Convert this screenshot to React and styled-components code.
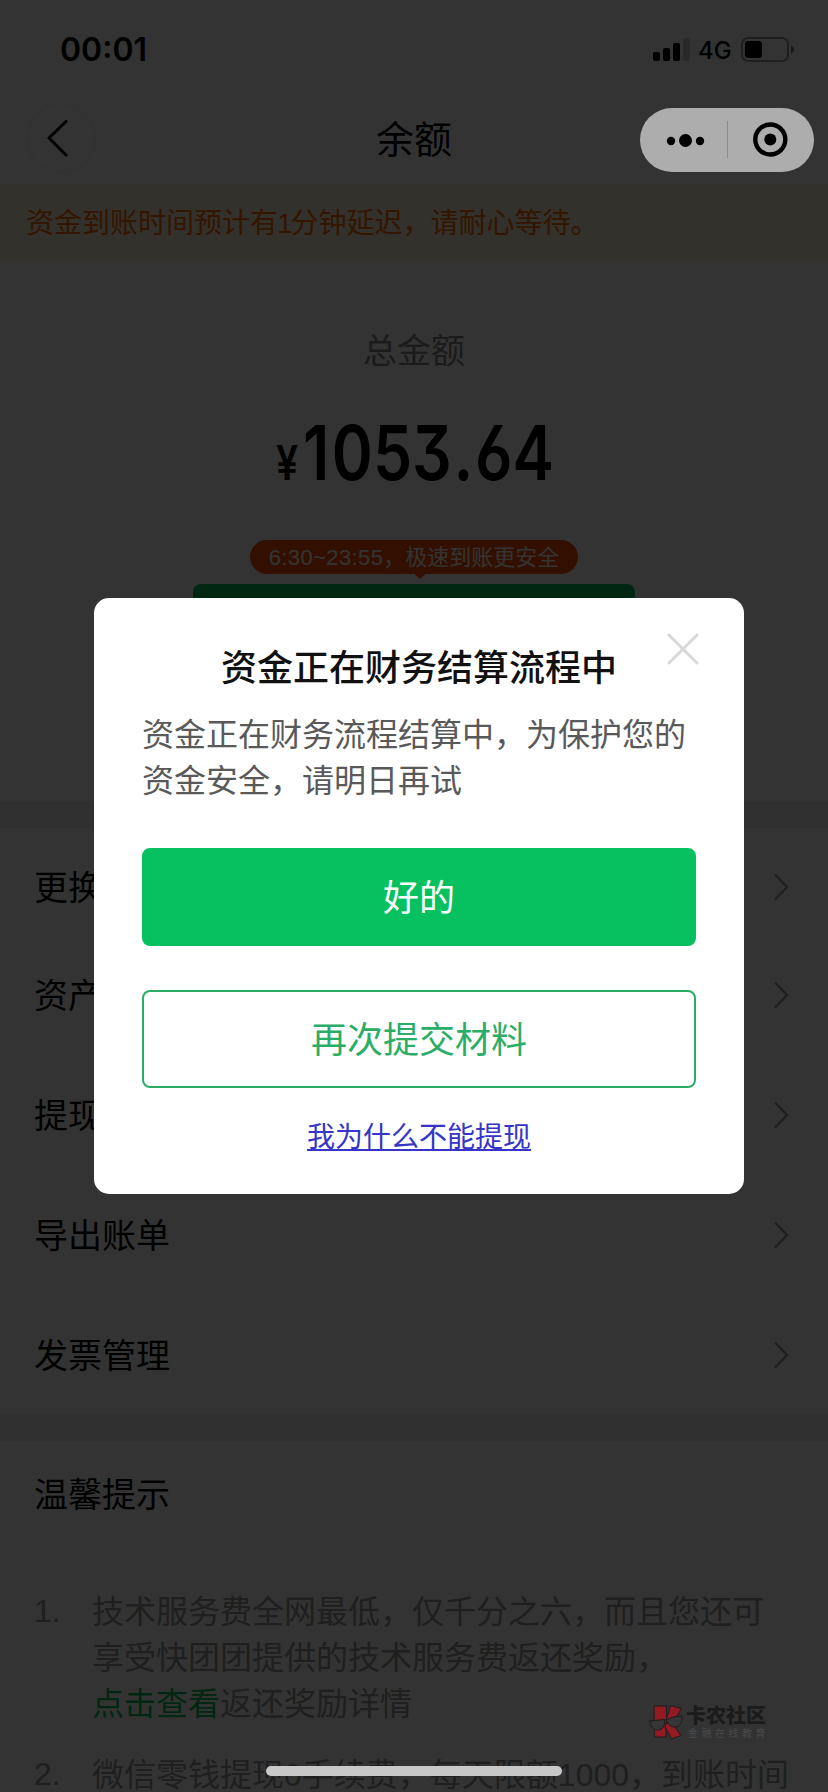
import React from "react";
import styled, { createGlobalStyle, css } from "styled-components";

const GlobalStyle = createGlobalStyle`
  * {
    box-sizing: border-box;
  }

  body {
    margin: 0;
    background-color: #fff;
    font-family: "Noto Sans CJK SC", "Noto Sans", sans-serif;
  }
`;

const menuItems = ["更换", "资产", "提现", "导出账单", "发票管理"];

const App = () => {
  return (
    <Screen>
      <GlobalStyle />
      <StatusBar>
        <Clock>00:01</Clock>
        <StatusIcons>
          <svg width="37" height="23" viewBox="0 0 37 23">
            <rect x="0" y="14" width="7" height="9" rx="2" />
            <rect x="10" y="10" width="7" height="13" rx="2" />
            <rect x="20" y="5" width="7" height="18" rx="2" />
            <rect x="30" y="0" width="7" height="23" rx="2" opacity="0.2" />
          </svg>
          <Network>4G</Network>
          <svg width="54" height="25" viewBox="0 0 54 25">
            <rect x="1" y="1" width="46" height="23" rx="6" fill="none" stroke="#000" strokeWidth="2" opacity="0.4" />
            <rect x="4" y="4" width="17" height="17" rx="3" />
            <path d="M50 8.500c4 1.500 4 6.500 0 8z" opacity="0.5" />
          </svg>
        </StatusIcons>
      </StatusBar>

      <NavBar>
        <BackButton>
          <svg width="22" height="38" viewBox="0 0 22 38" fill="none">
            <path d="M20 2.500L3 19L20 36" stroke="#000" strokeWidth="3" strokeLinecap="round" strokeLinejoin="round" />
          </svg>
        </BackButton>
        <NavTitle>余额</NavTitle>
      </NavBar>

      <Notice>
        资金到账时间预计有<NoticeDigit>1</NoticeDigit>分钟延迟，请耐心等待。
      </Notice>

      <Balance>
        <BalanceLabel>总金额</BalanceLabel>
        <Amount>
          <Currency>¥</Currency>
          <Digits>
            <Thousand>1</Thousand>053<Dot>.</Dot>64
          </Digits>
        </Amount>
        <Tip>
          <TipTime>6:30~23:55</TipTime>，极速到账更安全
        </Tip>
        <WithdrawButton />
      </Balance>

      <Menu>
        {menuItems.map((item) => (
          <MenuRow key={item}>
            <MenuLabel>{item}</MenuLabel>
            <svg width="16" height="28" viewBox="0 0 16 28" fill="none">
              <path d="M2 1.500L14 14L2 26.500" stroke="#9a9a9a" strokeWidth="2.400" />
            </svg>
          </MenuRow>
        ))}
      </Menu>

      <Hints>
        <HintsTitle>温馨提示</HintsTitle>
        <HintList>
          <Hint>
            <HintNumber>1.</HintNumber>
            <p>
              技术服务费全网最低，仅千分之六，而且您还可
              <br />
              享受快团团提供的技术服务费返还奖励，
              <br />
              <HintLink>点击查看</HintLink>返还奖励详情
            </p>
          </Hint>
          <Hint>
            <HintNumber>2.</HintNumber>
            <p>
              微信零钱提现<Latin>0</Latin>手续费，每天限额<Latin>1000</Latin>，到账时间
            </p>
          </Hint>
        </HintList>
      </Hints>

      <Overlay>
        <Dialog>
          <CloseButton>
            <svg width="32" height="32" viewBox="0 0 32 32" fill="none">
              <path d="M2 2L30 30M30 2L2 30" stroke="#d8d8d8" strokeWidth="3" strokeLinecap="round" />
            </svg>
          </CloseButton>
          <DialogTitle>资金正在财务结算流程中</DialogTitle>
          <DialogText>资金正在财务流程结算中，为保护您的资金安全，请明日再试</DialogText>
          <Button $primary>好的</Button>
          <Button>再次提交材料</Button>
          <WhyLink>我为什么不能提现</WhyLink>
        </Dialog>
      </Overlay>

      <Capsule>
        <svg width="174" height="64" viewBox="0 0 174 64">
          <circle cx="31" cy="33" r="4.200" />
          <circle cx="45.500" cy="32.500" r="6.500" />
          <circle cx="60" cy="33" r="4.200" />
          <path d="M87.500 13v37" stroke="#8c8c8c" strokeWidth="1" />
          <circle cx="130.300" cy="31.500" r="15" fill="none" stroke="#000" strokeWidth="4.400" />
          <circle cx="130.300" cy="31.500" r="6" />
        </svg>
      </Capsule>

      <Watermark>
        <svg width="36" height="36" viewBox="0 0 36 36">
          <g fill="#921a22" stroke="#1d1d1d" strokeWidth="1">
            <path d="M6 2h12.500l-0.500 31H6.500z" />
            <path d="M22.500 1.500L33.500 4.500L26 17H18z" />
            <path d="M18 19h6.500l8.500 12.500-9.500 3.500-6.500-12z" />
          </g>
          <g fill="#363636" stroke="#1c1c1c" strokeWidth="1">
            <path d="M1 17l15.500-1.500c1 6-2 10.500-7 10.500-4 0-6.500-3-7-7z" />
            <path d="M18.500 16c5-3 10-4 15.500-4 0 7-2 10.500-7 11-4 0-7-2-8.500-7z" />
          </g>
        </svg>
        <div>
          <MarkName>卡农社区</MarkName>
          <MarkSlogan>金融在线教育</MarkSlogan>
        </div>
      </Watermark>

      <HomeIndicator />
    </Screen>
  );
};

const Screen = styled.div`
  position: relative;
  width: 828px;
  height: 1792px;
  overflow: hidden;
  background-color: #fff;

  svg {
    display: block;
  }

  p {
    margin: 0;
  }
`;

const Latin = styled.span`
  font-family: "Liberation Sans", sans-serif;
`;

const StatusBar = styled.header`
  display: flex;
  justify-content: space-between;
  height: 88px;
  padding: 0 33px 0 60px;
`;

const Clock = styled.div`
  padding-top: 31px;
  font: 600 32px/38px Inter, sans-serif;
`;

const StatusIcons = styled.div`
  display: flex;
  align-items: center;
  height: 25px;
  margin-top: 37px;
`;

const Network = styled.span`
  width: 42px;
  margin-right: 9px;
  padding: 2px 0 0 8px;
  font: 500 24px/28px Inter, sans-serif;
`;

const NavBar = styled.nav`
  display: grid;
  grid-template-columns: 70px 1fr 70px;
  align-items: center;
  height: 95px;
  padding: 4px 26px 0;
`;

const BackButton = styled.div`
  display: flex;
  align-items: center;
  justify-content: center;
  width: 70px;
  height: 70px;
  padding-right: 8px;
  border: 2px solid #f3f3f3;
  border-radius: 50%;
`;

const NavTitle = styled.h1`
  margin: 0;
  padding-bottom: 2px;
  font-size: 38px;
  font-weight: 400;
  line-height: 50px;
  text-align: center;
`;

const Notice = styled.div`
  height: 78px;
  padding-left: 26px;
  background-color: #fff5d7;
  color: #ff6a00;
  font-size: 28px;
  line-height: 77px;
`;

const NoticeDigit = styled(Latin)`
  margin-left: -1px;
  letter-spacing: -2px;
`;

const Balance = styled.section`
  display: flex;
  flex-direction: column;
  align-items: center;
  height: 540px;
  padding-top: 63px;
`;

const BalanceLabel = styled.div`
  color: #888;
  font-size: 34px;
  line-height: 50px;
`;

const Amount = styled.div`
  display: flex;
  align-items: baseline;
  width: 276px;
  height: 90px;
  margin-top: 34px;
  font-family: Inter, sans-serif;
  font-weight: 600;
  line-height: 90px;
  white-space: nowrap;
`;

const Currency = styled.span`
  flex: 0 0 26px;
  font-size: 48px;
  transform: scaleX(0.82);
  transform-origin: left;
`;

/* open six and flat-top three */
const Digits = styled.span`
  font-size: 75px;
  font-feature-settings: "cv03", "cv09";
  transform: scaleX(0.83);
  transform-origin: left;
`;

const Thousand = styled.span`
  margin-right: 3px;
`;

const Dot = styled.span`
  margin: 0 2px;
`;

const Tip = styled.div`
  position: relative;
  width: 328px;
  height: 34px;
  margin-top: 42px;
  border-radius: 17px;
  background-color: #ff4d00;
  color: #fff;
  font-size: 22px;
  line-height: 30px;
  text-align: center;
  white-space: nowrap;

  &::after {
    content: "";
    position: absolute;
    top: 33px;
    left: 163px;
    border: 7px solid transparent;
    border-top: 6px solid #ff4d00;
    border-bottom: 0;
  }
`;

const TipTime = styled(Latin)`
  letter-spacing: 0.4px;
`;

const WithdrawButton = styled.div`
  width: 442px;
  height: 90px;
  margin-top: 10px;
  border-radius: 8px;
  background-color: #07c160;
`;

const Menu = styled.section`
  border-top: 27px solid #f0f0f0;
`;

const MenuRow = styled.div`
  display: flex;
  align-items: center;
  justify-content: space-between;
  height: 120px;
  padding: 0 39px 0 34px;
  border-bottom: 1px solid #f8f8f8;
  font-size: 34px;

  &:first-child {
    height: 107px;
    padding-top: 11px;
  }
`;

const MenuLabel = styled.span`
  padding-bottom: 2px;
`;

const Hints = styled.section`
  border-top: 26px solid #f0f0f0;
`;

const HintsTitle = styled.h2`
  height: 104px;
  margin: 0;
  padding-left: 34px;
  border-bottom: 1px solid #f8f8f8;
  font-size: 34px;
  font-weight: 400;
  line-height: 103px;
`;

const HintList = styled.div`
  padding: 41px 34px 0;
`;

const Hint = styled.div`
  display: flex;
  margin-bottom: 25px;
  color: #999;
  font-size: 32px;
  line-height: 46px;
  white-space: nowrap;
`;

const HintNumber = styled(Latin)`
  flex: 0 0 58px;
  padding-top: 2px;
`;

const HintLink = styled.span`
  color: #07c160;
`;

const Overlay = styled.div`
  position: absolute;
  inset: 0;
  display: flex;
  align-items: center;
  justify-content: center;
  padding-left: 10px;
  background-color: rgba(0, 0, 0, 0.8);
`;

const Dialog = styled.div`
  position: relative;
  display: flex;
  flex-direction: column;
  width: 650px;
  height: 596px;
  padding: 40px 48px 0;
  border-radius: 15px;
  background-color: #fff;
`;

const CloseButton = styled.div`
  position: absolute;
  top: 35px;
  right: 45px;
`;

const DialogTitle = styled.h2`
  margin: 0;
  color: #111;
  font-size: 36px;
  font-weight: 500;
  line-height: 54px;
  text-align: center;
`;

const DialogText = styled.p`
  height: 94px;
  padding-top: 17px;
  color: #595959;
  font-size: 32px;
  line-height: 46px;
`;

const Button = styled.button`
  height: 98px;
  margin: 44px 0 0;
  padding: 0 0 4px;
  border: 2px solid #2aae67;
  border-radius: 8px;
  background-color: #fff;
  color: #2aae67;
  font-family: inherit;
  font-size: 36px;
  line-height: 50px;

  ${(props) =>
    props.$primary &&
    css`
      margin-top: 62px;
      border-color: #07c160;
      background-color: #07c160;
      color: #fff;
    `}
`;

const WhyLink = styled.a`
  margin-top: 27px;
  color: #3535c8;
  font-size: 28px;
  line-height: 40px;
  text-align: center;
  text-decoration: underline;
  text-decoration-thickness: 2px;
  text-underline-offset: 2px;
`;

/* sits above the overlay, like the system chrome */
const Capsule = styled.div`
  position: absolute;
  top: 108px;
  left: 640px;
  border-radius: 32px;
  background-color: #adadad;
`;

const Watermark = styled.div`
  position: absolute;
  top: 1704px;
  left: 648px;
  display: flex;
  gap: 2px;
`;

const MarkName = styled.div`
  color: #1b1b1b;
  font-size: 20px;
  font-weight: 900;
  line-height: 22px;
`;

const MarkSlogan = styled.div`
  margin-top: 1px;
  padding-left: 2px;
  color: #4a4a4a;
  font-size: 10px;
  letter-spacing: 3.500px;
  line-height: 12px;
  white-space: nowrap;
`;

const HomeIndicator = styled.div`
  position: absolute;
  top: 1766px;
  left: 266px;
  width: 296px;
  height: 10px;
  border-radius: 5px;
  background-color: #c8c8c8;
`;

export default App;
